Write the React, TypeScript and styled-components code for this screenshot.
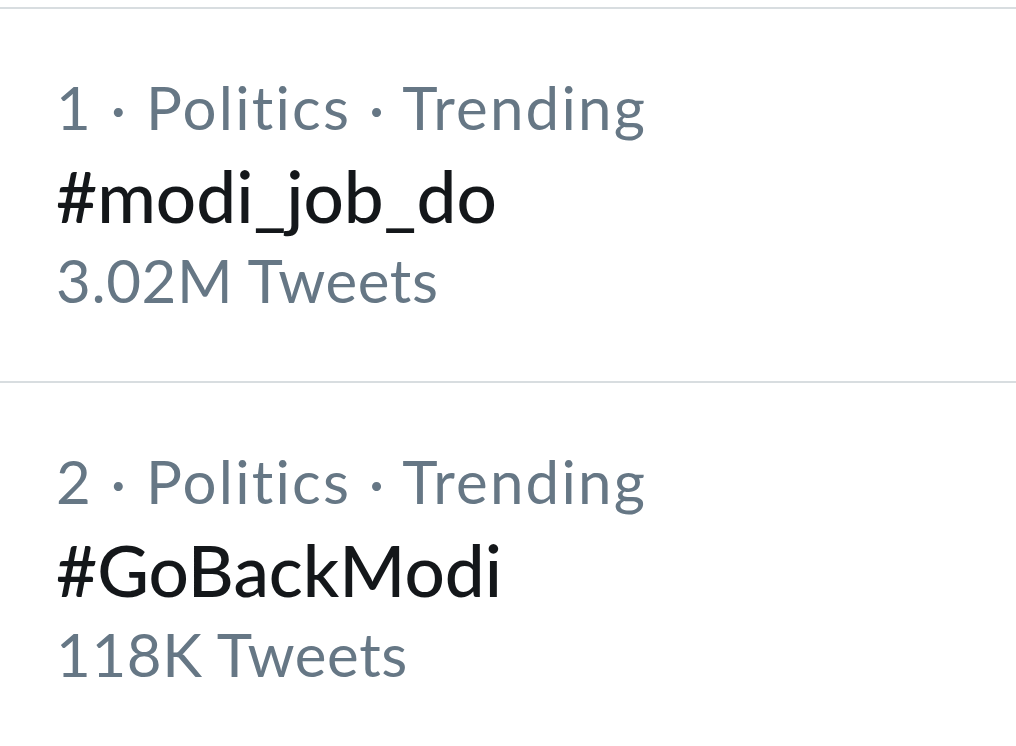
import React from 'react';
import styled, { createGlobalStyle } from 'styled-components';

const GlobalStyle = createGlobalStyle`
  html, body {
    margin: 0;
    padding: 0;
    background: #ffffff;
  }
  body {
    font-family: Lato, "Open Sans", sans-serif;
  }
`;

const TrendList = styled.div`
  width: 1016px;
  height: 746px;
  overflow: hidden;
  background: #ffffff;
  padding-top: 7px;
  box-sizing: border-box;
`;

const TrendItem = styled.div`
  border-top: 2px solid #d8dde0;
  padding: 68px 0 0 56px;
  height: 374px;
  box-sizing: border-box;
`;

const Meta = styled.div`
  font-size: 60px;
  line-height: 1;
  height: 60px;
  letter-spacing: 2.2px;
  color: #667785;
  white-space: nowrap;
`;

const Name = styled.div`
  margin-top: 23px;
  font-size: 71px;
  line-height: 1;
  height: 71px;
  font-weight: 500;
  color: #14171a;
  white-space: nowrap;
`;

const Count = styled.div`
  margin-top: 19px;
  font-size: 60px;
  line-height: 1;
  letter-spacing: 0.6px;
  color: #667785;
  white-space: nowrap;
`;

type Trend = { rank: number; category: string; name: string; count: string };

const trends: Trend[] = [
  { rank: 1, category: 'Politics', name: '#modi_job_do', count: '3.02M Tweets' },
  { rank: 2, category: 'Politics', name: '#GoBackModi', count: '118K Tweets' },
];

const App: React.FC = () => {
  return (
    <>
      <GlobalStyle />
      <TrendList>
        {trends.map((t) => (
          <TrendItem key={t.rank}>
            <Meta>
              {t.rank} · {t.category} · Trending
            </Meta>
            <Name>{t.name}</Name>
            <Count>{t.count}</Count>
          </TrendItem>
        ))}
      </TrendList>
    </>
  );
};

export default App;
